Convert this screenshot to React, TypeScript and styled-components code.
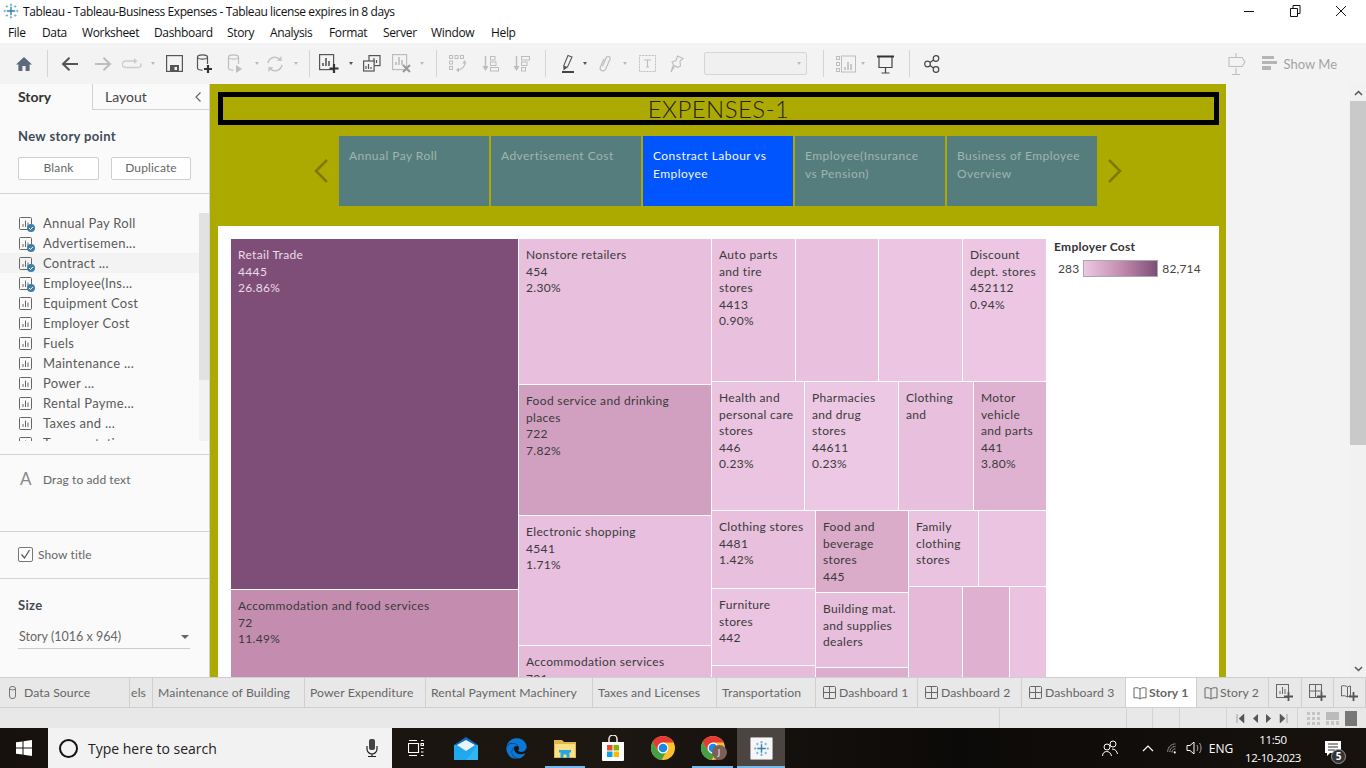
import React from "react";
import styled, { createGlobalStyle } from "styled-components";
import { FaEdge } from "react-icons/fa";

const Global = createGlobalStyle`
  html, body { margin: 0; padding: 0; overflow: hidden; background: #f3f3f3; }
  * { box-sizing: border-box; }
`;
const WIN = `"Open Sans", "Noto Sans", sans-serif`;
const TAB = `Lato, "Open Sans", sans-serif`;

const Page = styled.div`
  width: 1366px; height: 768px; display: flex; flex-direction: column; overflow: hidden;
  font-family: ${TAB};
`;
const TitleBar = styled.div`
  height: 22px; background: #fff; display: flex; align-items: center; padding-left: 3px;
  font: 12px ${WIN}; color: #111;
`;
const TitleText = styled.span` margin-left: 4px; letter-spacing: -0.4px; flex: 1; `;
const WinButtons = styled.div` display: flex; height: 22px; align-items: center; padding-right: 2px; `;
const WinButton = styled.div`
  width: 46px; display: flex; justify-content: center; align-items: center;
`;
const MenuBar = styled.div`
  height: 21px; background: #fff; display: flex; align-items: center; padding-left: 8px;
  font: 12px ${WIN}; color: #111;
`;
const MenuItem = styled.span<{ $w: number }>` width: ${p => p.$w}px; letter-spacing: -0.35px; `;
const Toolbar = styled.div`
  height: 41px; background: #f3f3f3; display: flex; align-items: center; flex: none;
`;
const Slot = styled.div<{ $w: number }>`
  width: ${p => p.$w}px; flex: none; height: 28px; display: flex; align-items: center; justify-content: center;
`;
const Sep = styled.div` width: 1px; height: 27px; background: #d4d4d4; flex: none; `;
const Caret = styled.div<{ $c?: string }>`
  flex: none; width: 0; height: 0; border-left: 2.5px solid transparent; border-right: 2.5px solid transparent;
  border-top: 3px solid ${p => p.$c || "#bbb"};
`;
const SelectCaret = styled.div`
  flex: none; width: 0; height: 0; border-left: 4px solid transparent; border-right: 4px solid transparent; border-top: 4px solid #666;
`;
const Disabled = styled.div`
  width: 103px; height: 23px; flex: none; background: #f0f0f0; border: 1px solid #d5d5d5; border-radius: 2px;
  display: flex; align-items: center; justify-content: flex-end; padding-right: 5px;
`;
const ShowMe = styled.div`
  margin-left: auto; margin-right: 29px; display: flex; align-items: center; gap: 4px;
  color: #a3a3a3; font: 13px ${TAB};
`;
const SignSlot = styled.div` margin-right: 10px; display: flex; `;
const Main = styled.div` height: 593px; display: flex; flex: none; overflow: hidden; `;
const Side = styled.aside`
  width: 210px; flex: none; background: #fafafa; border-right: 1px solid #d2d2d2; display: flex; flex-direction: column;
  color: #555;
`;
const SideTabs = styled.div` height: 26px; display: flex; flex: none; align-items: stretch; `;
const SideTab = styled.div<{ $active?: boolean }>`
  width: ${p => (p.$active ? 92 : 117)}px; font-size: 14px; display: flex; align-items: center;
  padding-left: ${p => (p.$active ? 18 : 12)}px; padding-bottom: ${p => (p.$active ? 2 : 0)}px; color: ${p => (p.$active ? "#333" : "#444")};
  font-weight: ${p => (p.$active ? 700 : 400)};
  border-bottom: ${p => (p.$active ? "none" : "1px solid #d2d2d2")};
  border-left: ${p => (p.$active ? "none" : "1px solid #d2d2d2")};
  justify-content: flex-start;
`;
const Collapse = styled.span` margin-left: auto; margin-right: 7px; display: flex; `;
const Section = styled.div<{ $h: number }>`
  height: ${p => p.$h}px; flex: none; border-bottom: 1px solid #d2d2d2;
`;
const Heading = styled.div<{ $t: number }>`
  font-size: 13px; font-weight: 700; color: #3f4a55; padding: ${p => p.$t}px 0 0 18px; line-height: 16px; letter-spacing: 0.35px;
`;
const BtnRow = styled.div` display: flex; gap: 12px; padding: 13px 0 0 18px; `;
const Btn = styled.div<{ $w: number }>`
  width: ${p => p.$w}px; height: 23px; background: #fff; border: 1px solid #cfcfcf; border-radius: 2px;
  display: flex; align-items: center; justify-content: center; font-size: 12px; color: #666; padding-bottom: 2px; letter-spacing: 0.15px;
`;
const ListWrap = styled.div` display: flex; padding-top: 19px; height: 247px; `;
const List = styled.div` width: 199px; height: 228px; overflow: hidden; `;
const Row = styled.div<{ $on?: boolean }>`
  height: 20px; display: flex; align-items: center; padding-left: 19px; gap: 11px; font-size: 13px; color: #5a5a5a; letter-spacing: 0.3px;
  background: ${p => (p.$on ? "#f3f3f3" : "transparent")};
`;
const Track = styled.div` width: 10px; height: 228px; background: #f2f2f2; `;
const Thumb = styled.div` width: 10px; height: 167px; background: #e2e2e2; `;
const Drag = styled.div`
  display: flex; align-items: center; padding: 14px 0 0 20px; gap: 12px; font-size: 12px; color: #666; letter-spacing: 0.1px;
`;
const BigA = styled.span` font-size: 17px; color: #888; width: 11px; line-height: 20px; `;
const ShowT = styled.div` display: flex; align-items: center; gap: 5px; padding: 15px 0 0 18px; font-size: 12px; color: #666; letter-spacing: 0.1px; `;
const Check = styled.div`
  width: 15px; height: 15px; background: #fff; border: 1px solid #777; border-radius: 2px; display: flex; align-items: center; justify-content: center;
`;
const SizeSelect = styled.div`
  margin: 14px 19px 0 18px; height: 22px; border-bottom: 1px solid #ccc; display: flex; align-items: center; justify-content: space-between;
  font-size: 12.5px; color: #666; padding: 0 1px 2px 1px;
`;
const Work = styled.div` flex: 1; display: flex; background: #f3f3f3; `;
const Canvas = styled.div` width: 1016px; height: 593px; background: #aca900; padding: 8px 7px 0 8px; overflow: hidden; flex: none; `;
const StoryTitle = styled.div`
  height: 33px; border: 5px solid #000; display: flex; align-items: center; justify-content: center;
  font-size: 24px; font-weight: 300; color: #222; line-height: 23px; letter-spacing: 0.45px;
`;
const Nav = styled.div` height: 70px; margin-top: 11px; display: flex; align-items: center; padding-left: 89px; `;
const NavArrow = styled.div` width: 28px; flex: none; display: flex; justify-content: center; margin: 0 4px; &:first-child { margin-left: 0; } `;
const NavTabs = styled.div` display: flex; gap: 2px; `;
const NavTab = styled.div<{ $on?: boolean }>`
  width: 150px; height: 70px; padding: 11px 12px 0 10px; font-size: 12px; line-height: 18px; letter-spacing: 0.45px;
  background: ${p => (p.$on ? "#0055ff" : "#567d7d")}; color: ${p => (p.$on ? "#f2f5ff" : "#9fb5af")};
`;
const Panel = styled.div` background: #fff; margin-top: 20px; height: 460px; padding: 13px 0 0 13px; display: flex; `;
const Treemap = styled.div` width: 816px; height: 460px; display: flex; gap: 1px; flex: none; `;
const TCol = styled.div<{ $w: number }>` width: ${p => p.$w}px; flex: none; display: flex; flex-direction: column; gap: 1px; `;
const TRow = styled.div<{ $h: number }>` height: ${p => p.$h}px; flex: none; display: flex; gap: 1px; `;
const Cell = styled.div<{ $w?: number; $h?: number; $c: string; $light?: boolean }>`
  ${p => (p.$w ? `width:${p.$w}px;` : "")} ${p => (p.$h ? `height:${p.$h}px;` : "")}
  flex: none; background: ${p => p.$c}; padding: 8px 0 0 7px; font-size: 12px; line-height: 16.5px;
  color: ${p => (p.$light ? "#eaddE8" : "#3a3a3a")}; letter-spacing: 0.34px; white-space: pre-line; overflow: hidden;
`;
const Legend = styled.div` padding: 1px 0 0 7px; color: #333; `;
const LegendTitle = styled.div` font-size: 12px; font-weight: 700; letter-spacing: 0.3px; line-height: 14px; color: #333;`;
const LegendRow = styled.div` display: flex; align-items: center; margin-top: 6px; font-size: 12px; padding-left: 4px; color: #444; letter-spacing: 0.15px; `;
const Ramp = styled.div`
  width: 75px; height: 17px; margin: 0 4px 0 4px; border: 1px solid #aaa;
  background: linear-gradient(90deg, #ecc8e4, #c48db0 50%, #7f4e78);
`;
const VScroll = styled.div` margin-left: auto; width: 16px; height: 593px; background: #f1f1f1; display: flex; flex-direction: column; `;
const ScrollBtn = styled.div<{ $end?: boolean }>` height: 17px; display: flex; align-items: center; justify-content: center; flex: none; margin-top: ${p => (p.$end ? "auto" : "0")}; `;
const ScrollThumb = styled.div` height: 344px; background: #c9c9c9; flex: none; `;
const TabBar = styled.div`
  height: 31px; background: #e8e8e8; border-top: 1px solid #cfcfcf; border-bottom: 1px solid #cfcfcf; display: flex; flex: none; font-size: 12.2px; color: #666;
`;
const SheetTab = styled.div<{ $w: number; $on?: boolean }>`
  width: ${p => p.$w}px; flex: none; border-right: 1px solid #cfcfcf; display: flex; align-items: center; gap: 3px; padding-left: 5px;
  letter-spacing: 0.1px; white-space: nowrap; overflow: hidden;
  background: ${p => (p.$on ? "#fff" : "transparent")}; font-weight: ${p => (p.$on ? 700 : 400)};
`;
const IconTab = styled(SheetTab)` padding-left: 7px; `;
const StoryTab = styled(IconTab)` gap: 2px; `;
const AddBtn = styled(SheetTab)` justify-content: center; padding-left: 0; `;
const ClipTab = styled(SheetTab)` justify-content: flex-end; padding: 0 6px 0 0; `;
const SourceTab = styled(SheetTab)` padding-left: 9px; gap: 8px; `;
const Status = styled.div` height: 20px; background: #e8e8e8; display: flex; flex: none; `;
const StatusCell = styled.div<{ $w: number; $end?: boolean }>`
  width: ${p => p.$w}px; flex: none; border-right: ${p => (p.$end ? "none" : "1px solid #d4d4d4")}; display: flex; align-items: center; justify-content: space-around; padding: 0 6px;
`;
const Taskbar = styled.div`
  height: 40px; flex: none; display: flex; align-items: stretch; color: #fff;
  background: linear-gradient(90deg, #17110d, #1d1712 45%, #0c0a08 70%, #17120e);
`;
const StartBtn = styled.div` width: 48px; display: flex; align-items: center; justify-content: center; flex: none; `;
const SearchBox = styled.div`
  width: 344px; flex: none; background: #f2f2f2; display: flex; align-items: center; padding-left: 11px; color: #222;
  font: 14px ${WIN};
`;
const Ring = styled.div` width: 19px; height: 19px; border-radius: 50%; border: 2.5px solid #111; flex: none; margin-right: 10px; `;
const Mic = styled.div` margin-left: auto; margin-right: 14px; display: flex; `;
const TaskIcon = styled.div<{ $w: number; $ml?: number; $run?: boolean; $on?: boolean }>`
  width: ${p => p.$w}px; margin-left: ${p => p.$ml || 0}px; flex: none; display: flex; align-items: center; justify-content: center;
  background: ${p => (p.$on ? "#4a4540" : "transparent")};
  border-bottom: 2px solid ${p => (p.$run ? "#76b9ed" : "transparent")};
  border-top: 2px solid transparent;
`;
const Tray = styled.div` margin-left: auto; display: flex; align-items: center; font: 12px ${WIN}; `;
const TraySlot = styled.div<{ $w: number }>` width: ${p => p.$w}px; display: flex; justify-content: center; align-items: center; flex: none; `;
const Clock = styled.div` width: 80px; text-align: center; font-size: 11.5px; line-height: 18px; flex: none; letter-spacing: -0.4px; padding-top: 2px; `;
const Notif = styled.div` width: 40px; flex: none; display: flex; justify-content: center; position: relative; `;
const Badge = styled.div`
  position: absolute; left: 18px; top: 8px; width: 15px; height: 15px; border-radius: 50%; background: #333; border: 1px solid #999;
  font-size: 10px; font-weight: 700; text-align: center; line-height: 13px;
`;
const JBadge = styled.div`
  position: absolute; left: 11px; top: 9px; width: 15px; height: 15px; border-radius: 50%; background: #7a6058; color: #fff; font: 9px ${WIN}; text-align: center; line-height: 15px;
`;
const Rel = styled.div` position: relative; display: flex; `;
const SheetSvgWrap = styled.div` position: relative; width: 13px; height: 20px; flex: none; display: flex; align-items: center; `;
const Done = styled.svg` position: absolute; right: -3px; bottom: 1px; `;

const I = ({ w = 20, h = 20, vb, children }: { w?: number; h?: number; vb?: string; children: React.ReactNode }) => (
  <svg width={w} height={h} viewBox={vb || `0 0 ${w} ${h}`} fill="none">{children}</svg>
);
const D = "#555", G = "#bdbdbd";

const TableauLogo = ({ s = 16, a = "#2f7fb0", b = "#7fb3d0" }: { s?: number; a?: string; b?: string }) => (
  <svg width={s} height={s} viewBox="0 0 16 16">
    <path d="M7.3 3.800h1.400v3.500h3.500v1.400H8.700v3.500H7.300V8.700H3.800V7.300h3.500z" fill={a} />
    <path d="M7.400 .5h1.200v2.400H7.400zM6.800 1.100h2.400v1.200H6.800zM7.400 13.100h1.200v2.400H7.400zM6.800 13.700h2.400v1.200H6.800zM.5 7.400h2.400v1.200H.5zM1.100 6.800h1.200v2.400H1.100zM13.100 7.400h2.400v1.200h-2.400zM13.700 6.800h1.200v2.400h-1.200z" fill={b} />
    <path d="M3.300 2.200h1v2.600h-1zM2.500 3h2.600v1H2.500zM11.700 2.200h1v2.600h-1zM10.900 3h2.600v1h-2.600zM3.300 11.200h1v2.600h-1zM2.500 12h2.600v1H2.500zM11.700 11.200h1v2.600h-1zM10.900 12h2.600v1h-2.600z" fill={b} />
  </svg>
);
const Home = () => <I w={18} h={18}><path d="M9 2 1 9.500h2.400V16h4V11h3.200v5h4V9.500H17z" fill="#5b6b7b" /></I>;
const Back = ({ c = D }: { c?: string }) => <I w={18} h={18}><path d="M17 9H2M8.500 2.800 2 9l6.500 6.200" stroke={c} strokeWidth="2" /></I>;
const Fwd = ({ c = G }: { c?: string }) => <I w={18} h={18}><path d="M1 9h15M9.500 2.800 16 9l-6.500 6.200" stroke={c} strokeWidth="2" /></I>;
const Redo = () => <I w={20} h={14}><path d="M13 4H3.500A2.500 2.500 0 0 0 3.500 10.500h13a2.500 2.500 0 0 0 2-4" stroke="#ccc" strokeWidth="1.400" /><path d="m12 1 3.500 3L12 7z" fill="#ccc" /></I>;
const Save = () => <I w={17} h={17}><rect x=".6" y=".6" width="15.800" height="15.800" stroke={D} strokeWidth="1.200" /><path d="M4 10h9v6.400H4z" fill={D} /><rect x="8.500" y="12" width="2.500" height="3" fill="#f3f3f3" /></I>;
const Cyl = ({ c }: { c: string }) => <g stroke={c} strokeWidth="1.200"><ellipse cx="6.500" cy="3" rx="5" ry="2.200" /><path d="M1.500 3v11c0 1.300 2 2.200 5 2.200M11.500 3v7" /></g>;
const AddDs = () => <I w={18} h={20}><Cyl c={D} /><path d="M12 11v8M8 15h8" stroke="#333" strokeWidth="2.200" /></I>;
const PauseDs = () => <I w={18} h={20}><Cyl c={G} /><path d="m9 11 6 4-6 4z" fill={G} /></I>;
const Refresh = () => <I w={18} h={18}><path d="M2 8a7 7 0 0 1 12-3.500M16 10a7 7 0 0 1-12 3.500" stroke="#c4c4c4" strokeWidth="1.500" /><path d="m15.500 1 .2 5-5-.3zM2.500 17l-.2-5 5 .3z" fill="#c4c4c4" /></I>;
const Bars = ({ c, x = 4, y = 4 }: { c: string; x?: number; y?: number }) => <path d={`M${x} ${y + 8}v-3M${x + 3} ${y + 8}v-8M${x + 6} ${y + 8}v-5`} stroke={c} strokeWidth="1.600" />;
const NewSheet = () => <I w={20} h={20}><rect x=".6" y=".6" width="14" height="15" stroke={D} strokeWidth="1.200" /><Bars c={D} x={4} y={4} /><path d="M15 10v9M10.500 14.500h9" stroke="#333" strokeWidth="2.200" /></I>;
const DupSheet = () => <I w={18} h={18}><rect x="6" y=".6" width="11" height="10" stroke={D} strokeWidth="1.200" /><path d="M8.500 8V6M11 8V3M13.500 8V5" stroke={D} strokeWidth="1.200" /><rect x=".6" y="6" width="10.500" height="10" stroke={D} strokeWidth="1.200" fill="#f3f3f3" /><path d="M3 14v-3M5.500 14V9M8 14v-2" stroke={D} strokeWidth="1.200" /></I>;
const ClearSheet = () => <I w={20} h={19}><rect x=".6" y=".6" width="14" height="15" stroke={G} strokeWidth="1.200" /><Bars c={G} x={4} y={3} /><path d="m11 11 7 7M18 11l-7 7" stroke="#999" strokeWidth="2" /></I>;
const Swap = () => <I w={19} h={19}><g stroke={G}><rect x="1.500" y="1.500" width="3" height="3" /><rect x="7" y="1.500" width="3" height="3" /><rect x="12.500" y="1.500" width="3" height="3" /><rect x="1.500" y="7" width="3" height="3" /><rect x="1.500" y="12.500" width="3" height="3" /></g><path d="M16.500 7c1.500 4-1.500 8-6 9" stroke={G} strokeWidth="1.200" /><path d="m18.500 9.500-2-3.500-2 3.500zM11 13.500 8 16l3 2.500z" fill={G} /></I>;
const SortAsc = () => <I w={17} h={18}><path d="M3.500 1v13" stroke={G} strokeWidth="1.500" /><path d="m.5 11 3 5 3-5z" fill={G} /><g stroke={G}><rect x="8.500" y="1.500" width="4.500" height="3.500" /><rect x="8.500" y="7" width="5.500" height="3.500" /><rect x="8.500" y="12.500" width="8" height="3.500" /></g></I>;
const SortDesc = () => <I w={17} h={18}><path d="M3.500 1v13" stroke={G} strokeWidth="1.500" /><path d="m.5 11 3 5 3-5z" fill={G} /><g stroke={G}><rect x="8.500" y="1.500" width="8" height="3.500" /><rect x="8.500" y="7" width="5.500" height="3.500" /><rect x="8.500" y="12.500" width="4" height="3.500" /></g></I>;
const Pen = () => <I w={14} h={20}><path d="M7 1.500 11 3 6.500 13 3 15.500 2.800 11.500z" stroke={D} strokeWidth="1.100" /><path d="m3 15.500 3.500-2.500-3.700-1.500z" fill={D} /><rect x="1" y="17" width="12" height="2" fill="#444" /></I>;
const Clip = () => <I w={14} h={19}><g transform="rotate(24 7 9.500)"><path d="M4.200 5.500v9a2.800 2.800 0 0 0 5.600 0V3.500a2 2 0 0 0-4 0V13" stroke={G} strokeWidth="1.200" /></g></I>;
const TextBox = () => <I w={17} h={17}><rect x=".5" y=".5" width="16" height="16" stroke={G} strokeDasharray="2 1" /><path d="M5 5h7M8.500 5v7M7 12h3" stroke={G} strokeWidth="1.100" /></I>;
const Pin = () => <I w={14} h={18}><path d="M7.500 1 13 3.500 10 6l.5 5-3 1.500-2.500-2L1 17l2.500-7.500L2 7l4-1.500z" stroke={G} strokeWidth="1.100" /></I>;
const Fit = () => <I w={20} h={20}><g stroke={G}><rect x=".5" y="2.500" width="3" height="3" /><rect x=".5" y="8.500" width="3" height="3" /><rect x=".5" y="14.500" width="3" height="3" /><rect x="5.500" y="2" width="14" height="16" /></g><path d="M9 16v-3M12 16V8M15 16v-6" stroke={G} strokeWidth="1.600" /></I>;
const Present = () => <I w={17} h={20}><path d="M0 2.500h17" stroke="#333" strokeWidth="2" /><path d="M2 3v10.500h13V3" stroke="#444" strokeWidth="1.200" /><path d="M8.500 14v5M4.500 19h8" stroke="#444" strokeWidth="1.200" /></I>;
const Share = () => <I w={16} h={18}><g stroke="#444" strokeWidth="1.200"><circle cx="3.500" cy="9" r="2.800" /><circle cx="12" cy="3.500" r="2.800" /><circle cx="12" cy="14.500" r="2.800" /><path d="m6 7.500 3.500-2.500M6 10.500l3.500 2.500" /></g></I>;
const Sign = () => <I w={18} h={22}><path d="M8 0v4M8 15v7M4 21.500h8" stroke={G} strokeWidth="1.100" /><path d="M1 4.500h13l3 4.500-3 4.500H1z" stroke={G} strokeWidth="1.100" /></I>;
const ShowBars = () => <I w={15} h={15}><path d="M0 0h12v3H0zM0 5h15v3H0zM0 10h9v4H0z" fill="#b5b5b5" /></I>;

const SheetIcon = ({ done }: { done: boolean }) => (
  <SheetSvgWrap>
    <I w={13} h={13}><rect x=".5" y=".5" width="12" height="12" rx="1" stroke="#666" /><path d="M4 10V7M6.500 10V3.500M9 10V5.500" stroke="#666" /></I>
    {done && <Done width="8" height="8" viewBox="0 0 8 8"><circle cx="4" cy="4" r="4" fill="#3d7fa6" /><path d="m2 4 1.500 1.500L6 2.800" stroke="#fff" fill="none" /></Done>}
  </SheetSvgWrap>
);
const Dash = () => <I w={13} h={13}><rect x=".5" y=".5" width="12" height="12" rx="1" stroke="#666" /><path d="M.5 6.500h12M6.500 .5v12" stroke="#666" /></I>;
const Book = () => <I w={14} h={14}><path d="M7 3C5 1.500 3 1.500 1 2v10c2-.5 4-.5 6 1 2-1.500 4-1.500 6-1V2c-2-.5-4-.5-6 1zM7 3v10" stroke="#666" /></I>;
const DsIcon = () => <I w={7} h={13}><rect x=".5" y=".5" width="6" height="12" rx="2.500" stroke="#777" /><path d="M.5 3c2 1.200 4 1.200 6 0" stroke="#777" /></I>;
const AddTab = ({ k }: { k: number }) => (
  <I w={18} h={18}>
    {k === 0 && <><rect x=".5" y=".5" width="12" height="13" stroke="#666" /><path d="M4 10V7M6.500 10V3M9 10V5" stroke="#666" /></>}
    {k === 1 && <><rect x=".5" y=".5" width="12" height="13" stroke="#666" /><path d="M.5 7h12M6.500 .5v13" stroke="#666" /></>}
    {k === 2 && <path d="M6.500 3C5 1.500 2.500 1.500 .5 2v10c2-.5 4-.5 6 1 1-.8 2-1 3-1.100V2c-1 0-2 .3-3 1zM6.500 3v10" stroke="#666" />}
    <path d="M12.500 8v9M8 12.500h9" stroke="#555" strokeWidth="1.800" />
  </I>
);
const Chrome = ({ s = 24 }: { s?: number }) => (
  <svg width={s} height={s} viewBox="0 0 24 24">
    <circle cx="12" cy="12" r="12" fill="#fbc02d" />
    <path d="M12 0a12 12 0 0 0-10.400 6L6.800 15 12 6.500h10.400A12 12 0 0 0 12 0z" fill="#e53935" />
    <path d="M1.600 6A12 12 0 0 0 10.500 23.900L15.700 15H6.800z" fill="#43a047" />
    <circle cx="12" cy="12" r="5.500" fill="#fff" /><circle cx="12" cy="12" r="4.300" fill="#1e88e5" />
  </svg>
);
const Mail = () => (
  <I w={24} h={23}>
    <path d="M0 8 12 0l12 8z" fill="#0f6cbd" />
    <path d="M0 8h24v15H0z" fill="#2aa5e8" />
    <path d="M3 8 12 3l9 5-9 6z" fill="#e6f4fb" />
    <path d="M0 8l12 8 12-8v15H0z" fill="#22a8ee" />
    <path d="M24 8v15H12z" fill="#3cc0f5" opacity=".6" />
  </I>
);
const Folder = () => (
  <I w={22} h={19}>
    <path d="M0 1h8l2 2h12v16H0z" fill="#e3b84a" />
    <path d="M1 5h20v13H1z" fill="#fbe08a" />
    <path d="M5 11h12v2.500h-1.500V19h-3v-3.500h-3V19h-3v-5.500H5z" fill="#2aa5dc" />
  </I>
);

const menu: [string, number][] = [["File", 34], ["Data", 40], ["Worksheet", 72], ["Dashboard", 73], ["Story", 43], ["Analysis", 59], ["Format", 54], ["Server", 48], ["Window", 60], ["Help", 40]];
const sheets = ["Annual Pay Roll", "Advertisemen...", "Contract ...", "Employee(Ins...", "Equipment Cost", "Employer Cost", "Fuels", "Maintenance ...", "Power ...", "Rental Payme...", "Taxes and ...", "Transportation"];
const navTabs = ["Annual Pay Roll", "Advertisement Cost", "Constract Labour vs Employee", "Employee(Insurance vs Pension)", "Business of Employee Overview"];
const tabs: [string, number][] = [["Maintenance of Building", 152], ["Power Expenditure", 121], ["Rental Payment Machinery", 167], ["Taxes and Licenses", 124], ["Transportation", 99]];

type C = { w?: number; h?: number; c: string; t?: string; light?: boolean };
const T = ({ cells }: { cells: C[] }) => <>{cells.map((x, i) => <Cell key={i} $w={x.w} $h={x.h} $c={x.c} $light={x.light}>{x.t}</Cell>)}</>;

export default function App() {
  return (
    <Page>
      <Global />
      <TitleBar>
        <TableauLogo />
        <TitleText>Tableau - Tableau-Business Expenses - Tableau license expires in 8 days</TitleText>
        <WinButtons>
          <WinButton><I w={11} h={11}><path d="M0 5.500h10" stroke="#111" /></I></WinButton>
          <WinButton><I w={11} h={12}><path d="M.5 3.500h7v8h-7zM3 3.500V.5h7v8H7.500" stroke="#111" /></I></WinButton>
          <WinButton><I w={12} h={12}><path d="m1 1 10 10M11 1 1 11" stroke="#111" /></I></WinButton>
        </WinButtons>
      </TitleBar>
      <MenuBar>{menu.map(([m, w]) => <MenuItem key={m} $w={w}>{m}</MenuItem>)}</MenuBar>
      <Toolbar>
        <Slot $w={47}><Home /></Slot><Sep />
        <Slot $w={43}><Back /></Slot><Slot $w={24}><Fwd /></Slot><Slot $w={34}><Redo /></Slot><Slot $w={7}><Caret /></Slot>
        <Slot $w={36}><Save /></Slot><Slot $w={26}><AddDs /></Slot><Slot $w={36}><PauseDs /></Slot><Slot $w={5}><Caret /></Slot>
        <Slot $w={32}><Refresh /></Slot><Slot $w={10}><Caret /></Slot><Slot $w={8} /><Sep />
        <Slot $w={38}><NewSheet /></Slot><Slot $w={6}><Caret $c="#555" /></Slot><Slot $w={36}><DupSheet /></Slot><Slot $w={24}><ClearSheet /></Slot><Slot $w={16}><Caret /></Slot><Slot $w={6} /><Sep />
        <Slot $w={40}><Swap /></Slot><Slot $w={26}><SortAsc /></Slot><Slot $w={36}><SortDesc /></Slot><Slot $w={6} /><Sep />
        <Slot $w={7} /><Slot $w={30}><Pen /></Slot><Slot $w={4}><Caret $c="#555" /></Slot><Slot $w={36}><Clip /></Slot><Slot $w={4}><Caret /></Slot>
        <Slot $w={40}><TextBox /></Slot><Slot $w={20}><Pin /></Slot><Slot $w={17} />
        <Disabled><Caret /></Disabled><Slot $w={16} /><Sep />
        <Slot $w={7} /><Slot $w={30}><Fit /></Slot><Slot $w={4}><Caret /></Slot><Slot $w={40}><Present /></Slot><Slot $w={4} /><Sep />
        <Slot $w={44}><Share /></Slot>
        <ShowMe><SignSlot><Sign /></SignSlot><Slot $w={20}><ShowBars /></Slot><span>Show Me</span></ShowMe>
      </Toolbar>
      <Main>
        <Side>
          <SideTabs>
            <SideTab $active>Story</SideTab>
            <SideTab>Layout<Collapse><I w={8} h={12}><path d="M6.500 1.500 2 6l4.500 4.500" stroke="#666" strokeWidth="1.200" /></I></Collapse></SideTab>
          </SideTabs>
          <Section $h={84}>
            <Heading $t={18}>New story point</Heading>
            <BtnRow><Btn $w={81}>Blank</Btn><Btn $w={80}>Duplicate</Btn></BtnRow>
          </Section>
          <Section $h={261}>
            <ListWrap>
              <List>{sheets.map((s, i) => <Row key={s} $on={i === 2}><SheetIcon done={i < 4} />{s}</Row>)}</List>
              <Track><Thumb /></Track>
            </ListWrap>
          </Section>
          <Section $h={77}><Drag><BigA>A</BigA>Drag to add text</Drag></Section>
          <Section $h={47}>
            <ShowT><Check><I w={11} h={11}><path d="m1.500 5.500 3 3.500 5-8" stroke="#555" strokeWidth="1.300" /></I></Check>Show title</ShowT>
          </Section>
          <Heading $t={18}>Size</Heading>
          <SizeSelect>Story (1016 x 964)<SelectCaret /></SizeSelect>
        </Side>
        <Work>
          <Canvas>
            <StoryTitle>EXPENSES-1</StoryTitle>
            <Nav>
              <NavArrow><I w={16} h={26}><path d="M14 2 3 13l11 11" stroke="#7d7a00" strokeWidth="2.500" /></I></NavArrow>
              <NavTabs>{navTabs.map((t, i) => <NavTab key={t} $on={i === 2}>{t}</NavTab>)}</NavTabs>
              <NavArrow><I w={16} h={26}><path d="m2 2 11 11L2 24" stroke="#7d7a00" strokeWidth="2.500" /></I></NavArrow>
            </Nav>
            <Panel>
              <Treemap>
                <TCol $w={287}>
                  <T cells={[
                    { h: 350, c: "#7f4e78", light: true, t: "Retail Trade\n4445\n26.86%" },
                    { h: 120, c: "#c48db0", t: "Accommodation and food services\n72\n11.49%" },
                  ]} />
                </TCol>
                <TCol $w={192}>
                  <T cells={[
                    { h: 145, c: "#e8bfdd", t: "Nonstore retailers\n454\n2.30%" },
                    { h: 130, c: "#d1a0c1", t: "Food service and drinking\nplaces\n722\n7.82%" },
                    { h: 129, c: "#e8bfde", t: "Electronic shopping\n4541\n1.71%" },
                    { h: 60, c: "#e6bbda", t: "Accommodation services\n721" },
                  ]} />
                </TCol>
                <TCol $w={334}>
                  <TRow $h={142}>
                    <T cells={[
                      { w: 83, c: "#e9c1df", t: "Auto parts\nand tire\nstores\n4413\n0.90%" },
                      { w: 82, c: "#e9c1df" }, { w: 83, c: "#ebc5e2" },
                      { w: 83, c: "#ecc6e3", t: "Discount\ndept. stores\n452112\n0.94%" },
                    ]} />
                  </TRow>
                  <TRow $h={128}>
                    <T cells={[
                      { w: 92, c: "#ebc4e1", t: "Health and\npersonal care\nstores\n446\n0.23%" },
                      { w: 93, c: "#edc8e4", t: "Pharmacies\nand drug\nstores\n44611\n0.23%" },
                      { w: 74, c: "#e8bfdc", t: "Clothing\nand" },
                      { w: 72, c: "#e0b2d1", t: "Motor\nvehicle\nand parts\n441\n3.80%" },
                    ]} />
                  </TRow>
                  <TRow $h={190}>
                    <TCol $w={103}>
                      <T cells={[
                        { h: 77, c: "#e8bfdc", t: "Clothing stores\n4481\n1.42%" },
                        { h: 76, c: "#ebc4e1", t: "Furniture\nstores\n442" },
                        { h: 40, c: "#e7bcdb" },
                      ]} />
                    </TCol>
                    <TCol $w={92}>
                      <T cells={[
                        { h: 81, c: "#dbabca", t: "Food and\nbeverage\nstores\n445" },
                        { h: 74, c: "#e7bedb", t: "Building mat.\nand supplies\ndealers" },
                        { h: 40, c: "#dcadcc" },
                      ]} />
                    </TCol>
                    <TCol $w={137}>
                      <TRow $h={75}>
                        <T cells={[{ w: 69, c: "#eac3e0", t: "Family\nclothing\nstores" }, { w: 67, c: "#ebc4e2" }]} />
                      </TRow>
                      <TRow $h={110}>
                        <T cells={[{ w: 53, c: "#e6b9d8" }, { w: 46, c: "#dfb0cf" }, { w: 36, c: "#ebc3e1" }]} />
                      </TRow>
                    </TCol>
                  </TRow>
                </TCol>
              </Treemap>
              <Legend>
                <LegendTitle>Employer Cost</LegendTitle>
                <LegendRow>283<Ramp />82,714</LegendRow>
              </Legend>
            </Panel>
          </Canvas>
          <VScroll>
            <ScrollBtn><I w={9} h={6}><path d="m1 5 3.500-3.500L8 5" stroke="#555" strokeWidth="1.500" /></I></ScrollBtn>
            <ScrollThumb />
            <ScrollBtn $end><I w={9} h={6}><path d="m1 1 3.500 3.500L8 1" stroke="#555" strokeWidth="1.500" /></I></ScrollBtn>
          </VScroll>
        </Work>
      </Main>
      <TabBar>
        <SourceTab $w={130}><DsIcon />Data Source</SourceTab>
        <ClipTab $w={23}>els</ClipTab>
        {tabs.map(([t, w]) => <SheetTab key={t} $w={w}>{t}</SheetTab>)}
        <IconTab $w={102}><Dash />Dashboard 1</IconTab>
        <IconTab $w={104}><Dash />Dashboard 2</IconTab>
        <IconTab $w={104}><Dash />Dashboard 3</IconTab>
        <StoryTab $w={71} $on><Book />Story 1</StoryTab>
        <StoryTab $w={72}><Book />Story 2</StoryTab>
        <AddBtn $w={33}><AddTab k={0} /></AddBtn>
        <AddBtn $w={32}><AddTab k={1} /></AddBtn>
        <AddBtn $w={32}><AddTab k={2} /></AddBtn>
      </TabBar>
      <Status>
        <StatusCell $w={1000} /><StatusCell $w={127} /><StatusCell $w={26} /><StatusCell $w={27} /><StatusCell $w={47} />
        <StatusCell $w={71}>
          <I w={9} h={9}><path d="M1 0v9M8 0v9L3 4.500z" fill="#555" stroke="#555" strokeWidth=".5" /></I>
          <I w={7} h={9}><path d="M6 0v9L1 4.500z" fill="#555" /></I>
          <I w={7} h={9}><path d="M1 0v9l5-4.500z" fill="#555" /></I>
          <I w={9} h={9}><path d="M8 0v9M1 0v9l5-4.500z" fill="#555" stroke="#555" strokeWidth=".5" /></I>
        </StatusCell>
        <StatusCell $w={68} $end>
          <I w={13} h={13}><path d="M0 0h3v3H0zM5 0h3v3H5zM10 0h3v3h-3zM0 5h3v3H0zM5 5h3v3H5zM10 5h3v3h-3zM0 10h3v3H0zM5 10h3v3H5zM10 10h3v3h-3z" fill="#c4c4c4" /></I>
          <I w={13} h={13}><path d="M0 0h13v8H0z" fill="#bbb" /><path d="M0 9h3v4H0zM5 9h3v4H5zM10 9h3v4h-3z" fill="#c4c4c4" /></I>
          <I w={12} h={15}><path d="M0 0h12v15H0z" fill="#777" /></I>
        </StatusCell>
      </Status>
      <Taskbar>
        <StartBtn><I w={16} h={16}><path d="M0 2.300 6.500 1.400v6.200H0zM7.500 1.300 16 0v7.600H7.500zM0 8.500h6.500v6.100L0 13.700zM7.500 8.500H16V16l-8.500-1.200z" fill="#fff" /></I></StartBtn>
        <SearchBox><Ring />Type here to search<Mic><I w={12} h={18}><rect x="3" y="0" width="6" height="11" rx="2" fill="#444" /><path d="M1 7v3a5 5 0 0 0 10 0V7M6 15v3M2 17.500h8" stroke="#222" strokeWidth="1.200" /></I></Mic></SearchBox>
        <TaskIcon $w={47}><I w={16} h={16}><path d="M.5 3.500h10v9H.5zM1 .5h8M1 15.500h8M13 .5h2.500M13 3.500h2.500v2H13zM13 8.500h2.500M13 12h2.500M13 15.500h2.500" stroke="#fff" strokeWidth="1.100" /></I></TaskIcon>
        <TaskIcon $w={54}><Mail /></TaskIcon>
        <TaskIcon $w={46}><FaEdge size={21} color="#0a78d7" /></TaskIcon>
        <TaskIcon $w={40} $ml={6} $run><Folder /></TaskIcon>
        <TaskIcon $w={56}><I w={24} h={26}><path d="M8 7V4a4 4 0 0 1 8 0v3" stroke="#eee" strokeWidth="1.500" /><path d="M1 7h22v18a1 1 0 0 1-1 1H2a1 1 0 0 1-1-1z" fill="#fff" /><path d="M6 10h5.500v5.500H6z" fill="#e74c25" /><path d="M12.500 10H18v5.500h-5.500z" fill="#7fba00" /><path d="M6 16.500h5.500V22H6z" fill="#00a4ef" /><path d="M12.500 16.500H18V22h-5.500z" fill="#ffb900" /></I></TaskIcon>
        <TaskIcon $w={44}><Chrome /></TaskIcon>
        <TaskIcon $w={41} $ml={7} $run><Rel><Chrome /><JBadge>J</JBadge></Rel></TaskIcon>
        <TaskIcon $w={48} $ml={4} $run $on><I w={23} h={23}><rect x=".5" y=".5" width="22" height="22" rx="1" fill="#f4f6f8" stroke="#aaa" /><g transform="translate(3.500 3.500)"><TableauLogo s={16} /></g></I></TaskIcon>
        <Tray>
          <TraySlot $w={24}><I w={16} h={17}><circle cx="5" cy="7" r="3" stroke="#fff" /><circle cx="11" cy="4" r="3" stroke="#fff" /><path d="M.5 16c0-6 8-6 9 0M10 9c3 0 5 2 5.500 5" stroke="#fff" /></I></TraySlot>
          <TraySlot $w={7} />
          <TraySlot $w={38}><I w={12} h={8}><path d="m1 7 5-5 5 5" stroke="#fff" strokeWidth="1.200" /></I></TraySlot>
          <TraySlot $w={12}><I w={17} h={15}><path d="M1 12a11 11 0 0 1 11-11M4 12.500a8 8 0 0 1 8-8M7 13a5 5 0 0 1 5-5" stroke="#fff" strokeDasharray="2 .7" /><circle cx="11" cy="13" r="1.500" fill="#fff" /></I></TraySlot>
          <TraySlot $w={30}><I w={16} h={14}><path d="M1 4.500h3L8 1v12L4 9.500H1z" stroke="#fff" /><path d="M11 4c1 2 1 4 0 6M13.500 2c2 3 2 7 0 10" stroke="#aaa" /></I></TraySlot>
          <TraySlot $w={24}>ENG</TraySlot>
          <Clock>11:50<br />12-10-2023</Clock>
          <Notif>
            <I w={16} h={15}><path d="M0 0h16v12H5l-3 3v-3H0z" fill="#fff" /><path d="M3 3h10M3 6h10M3 9h7" stroke="#333" /></I>
            <Badge>5</Badge>
          </Notif>
          <TraySlot $w={13} />
        </Tray>
      </Taskbar>
    </Page>
  );
}
